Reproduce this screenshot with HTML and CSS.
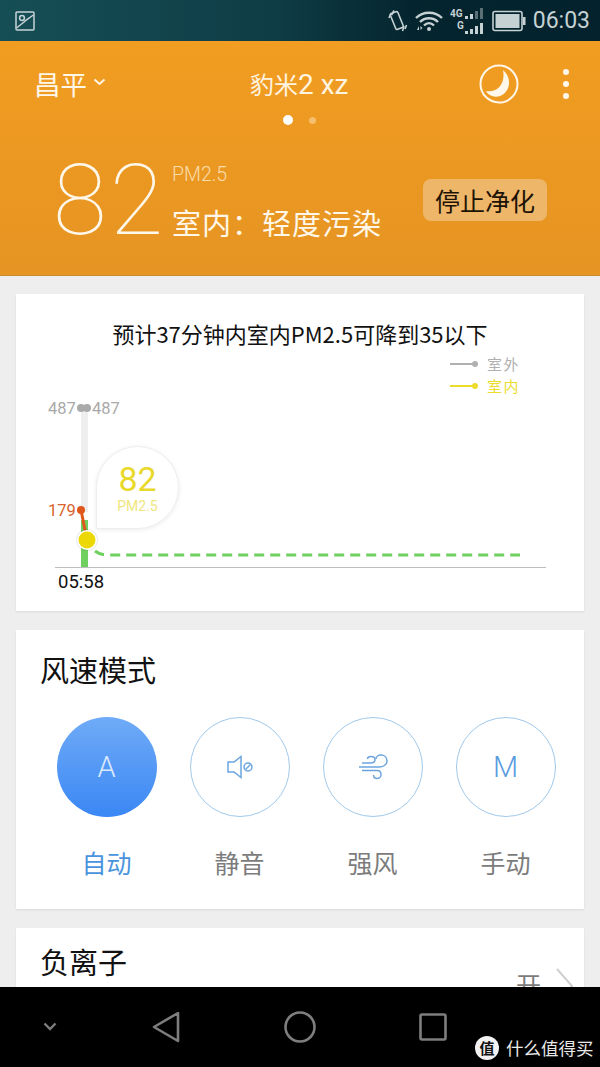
FILE: index.html
```html
<!DOCTYPE html>
<html lang="zh-CN">
<head>
<meta charset="utf-8">
<title>豹米2 xz</title>
<link rel="stylesheet" href="styles.css">
</head>
<body>
<div class="phone">
  <div class="status">
    <svg class="pic" width="20" height="20" viewBox="0 0 20 20"><rect x="1" y="1" width="18" height="18" rx="1"/><circle cx="7" cy="7" r="2.4"/><path d="M1.5 17 L9 11 C11 9 13 8 18.500 4"/></svg>
    <div class="status-right">
      <svg class="ic-vib" width="20" height="26" viewBox="0 0 20 26"><rect x="5" y="4" width="8" height="17" rx="1.500" transform="rotate(-22 9 13)"/><path d="M3 5 L1 10 M6 2.500 L3.500 7 M16 18 L14.500 23 M18.500 17 L17 21"/></svg>
      <svg class="ic-wifi" width="28" height="24" viewBox="0 0 28 24"><path d="M1 9 C8 2 20 2 27 9 M5 13 C10 8 18 8 23 13 M9 16.500 C12 13.500 16 13.500 19 16.500"/><circle cx="14" cy="20" r="2" class="fill"/><path class="fill" d="M2 21 L4 17 L4 21 Z M5.500 17 L7.500 19 L5.500 21 Z"/></svg>
      <svg class="ic-sig" width="34" height="28" viewBox="0 0 34 28"><text x="0" y="10" class="sig-t">4G</text><text x="7" y="22" class="sig-t">G</text><rect x="15" y="9" width="3" height="3"/><rect x="20" y="7" width="3" height="5"/><rect class="dim" x="25" y="4" width="3" height="8"/><rect class="dim" x="30" y="1" width="3" height="11"/><rect x="15" y="24" width="3" height="3"/><rect x="20" y="22" width="3" height="5"/><rect x="25" y="19" width="3" height="8"/><rect x="30" y="16" width="3" height="11"/></svg>
      <svg class="ic-bat" width="34" height="22" viewBox="0 0 34 22"><rect class="bat-o" x="1" y="1.500" width="29" height="19" rx="2"/><rect class="bat-i" x="3.500" y="4" width="24" height="14"/><rect class="bat-i" x="31" y="7" width="2.500" height="8"/></svg>
      <span class="time">06:03</span>
    </div>
  </div>

  <header class="head">
    <div class="topbar">
      <div class="city">昌平<svg class="city-arrow" width="13" height="8" viewBox="0 0 13 8"><path d="M1.500 1.500 L6.500 6 L11.500 1.500"/></svg></div>
      <div class="name">豹米<span class="name-lat">2 xz</span></div>
      <div class="actions">
        <svg class="moon" width="40" height="40" viewBox="0 0 40 40"><circle cx="20" cy="20" r="18.500"/><path class="moon-f" d="M24 6 C33 13 32 28 21 32 C15 34 9 31 7 27 C17 29 27 21 24 6 Z"/></svg>
        <div class="more"><i></i><i></i><i></i></div>
      </div>
    </div>
    <div class="pager"><i class="on"></i><i></i></div>
    <div class="summary">
      <div class="big">82</div>
      <div class="sum-text">
        <div class="pm">PM2.5</div>
        <div class="level">室内：轻度污染</div>
      </div>
      <div class="stop">停止净化</div>
    </div>
  </header>

  <main class="content">
    <section class="card chart-card">
      <h2 class="chart-title">预计37分钟内室内PM2.5可降到35以下</h2>
      <div class="chart">
        <svg class="chart-svg" width="568" height="264" viewBox="16 348 568 264">
          <rect class="bar-g" x="81" y="408" width="7" height="104"/>
          <rect class="bar-gr" x="81" y="520" width="7" height="47"/>
          <circle class="dot-v" cx="81" cy="408" r="4"/><circle class="dot-v" cx="87" cy="408" r="4"/>
          <text class="t-v" x="48" y="414">487</text><text class="t-v" x="92" y="414">487</text>
          <text class="t-o" x="48" y="516">179</text>
          <line class="red" x1="81" y1="510" x2="87" y2="540"/><circle class="dot-o" cx="81" cy="510" r="4"/>
          <line class="axis" x1="55" y1="567.500" x2="546" y2="567.500"/>
          <path class="dash" d="M95 551 Q100 555 108 555 L520 555"/>
          <circle class="knob-s" cx="87" cy="540" r="11"/>
          <circle class="knob-w" cx="87" cy="540" r="10"/>
          <circle class="knob" cx="87" cy="540" r="8.500"/>
          <text class="t-x" x="58" y="588">05:58</text>
        </svg>
        <div class="legend">
          <div class="leg-row"><i class="leg-line"></i><i class="leg-dot"></i><span class="leg-text">室外</span></div>
          <div class="leg-row in"><i class="leg-line"></i><i class="leg-dot"></i><span class="leg-text">室内</span></div>
        </div>
        <div class="bubble"><div class="b-num">82</div><div class="b-unit">PM2.5</div></div>
      </div>
    </section>

    <section class="card mode-card">
      <h2 class="sec-title">风速模式</h2>
      <div class="modes">
        <div class="mode active"><div class="circle"><span class="letter">A</span></div><div class="label">自动</div></div>
        <div class="mode"><div class="circle"><svg class="m-ic" width="28" height="26" viewBox="0 0 28 26"><path d="M2 8 L8 8 L15 2.500 L15 23.500 L8 18 L2 18 Z"/><circle cx="22" cy="13" r="4"/><path d="M19.500 15.500 L24.500 10.500"/></svg></div><div class="label">静音</div></div>
        <div class="mode"><div class="circle"><svg class="m-ic" width="30" height="26" viewBox="0 0 30 26"><path d="M1 13 L21 13 C25 13 29 11 29 7 C29 3 26 1 23 1 C20 1 18 3 18 5"/><path d="M4 9 L13 9 C16 9 17 7 17 5.500 C17 3.500 15 2.500 13 2.500 C11 2.500 9.500 3.500 9.500 5"/><path d="M4 16.500 L19 16.500 C22 16.500 23 18.500 23 20.500 C23 23 21 24.500 19 24.500 C17 24.500 15.500 23 15.500 21"/></svg></div><div class="label">强风</div></div>
        <div class="mode"><div class="circle"><span class="letter">M</span></div><div class="label">手动</div></div>
      </div>
    </section>

    <section class="card ion-card">
      <h2 class="sec-title">负离子</h2>
      <div class="ion-state"><span class="ion-val">开</span><svg class="ion-arrow" width="18" height="36" viewBox="0 0 18 36"><path d="M1 1 L16 18 L1 35"/></svg></div>
    </section>
  </main>

  <nav class="nav">
    <svg class="nav-down" width="14" height="9" viewBox="0 0 14 9"><path d="M1.500 1.500 L7 7 L12.500 1.500"/></svg>
    <svg class="nav-ic" width="28" height="32" viewBox="0 0 28 32"><path d="M26 2 L26 30 L2 16 Z"/></svg>
    <svg class="nav-ic" width="32" height="32" viewBox="0 0 32 32"><circle cx="16" cy="16" r="14.500"/></svg>
    <svg class="nav-ic" width="28" height="28" viewBox="0 0 28 28"><rect x="1.500" y="1.500" width="25" height="25" rx="1.500"/></svg>
    <div class="mark"><span class="mark-c">值</span><span class="mark-t">什么值得买</span></div>
  </nav>
</div>
</body>
</html>
```
FILE: styles.css
```css
* { box-sizing: border-box; }
html, body { margin: 0; padding: 0; }
body { font-family: "Noto Sans CJK SC", Roboto, sans-serif; background: #eeeeef; }
.phone { position: relative; width: 600px; height: 1067px; overflow: hidden; background: #eeeeef; }

.status { height: 41px; display: flex; align-items: center; justify-content: space-between; padding: 0 10px 0 15px; background: linear-gradient(90deg, #164e56 0%, #0f3d46 45%, #04242e 70%, #03222d 100%); }
.status svg { display: block; }
.pic { fill: none; stroke: #c6d4d6; stroke-width: 1.500; }
.status-right { display: flex; align-items: center; }
.ic-vib { fill: none; stroke: #c6d1d3; stroke-width: 1.600; margin-right: 7px; }
.ic-wifi { fill: none; stroke: #c6d1d3; stroke-width: 2.400; margin-right: 7px; }
.ic-wifi .fill { fill: #c6d1d3; stroke: none; }
.ic-sig { fill: #c6d1d3; margin-right: 8px; }
.ic-sig .dim { fill: #5a7076; }
.sig-t { font: 700 10px Roboto, sans-serif; fill: #c6d1d3; }
.bat-o { fill: none; stroke: #c6d1d3; stroke-width: 1.600; }
.bat-i { fill: #c6d1d3; }
.time { font: 400 23px Roboto, sans-serif; color: #c5d1d3; margin-left: 7px; }

.head { height: 235px; background: linear-gradient(180deg, #f19d21 0%, #e69423 100%); border-bottom: 1px solid #c98b35; color: #fff; }
.topbar { height: 86px; display: flex; align-items: center; padding: 0 31px 1px 34px; position: relative; }
.city { font-size: 26.500px; line-height: 38px; color: #fff7e8; display: flex; align-items: center; width: 210px; }
.city-arrow { fill: none; stroke: #fff7e8; stroke-width: 2; margin: 0 0 4px 6px; }
.name { flex: 1; font-size: 24px; line-height: 34px; color: #fff4e0; padding-left: 6px; white-space: nowrap; }
.name-lat { font: 400 28px Roboto, sans-serif; }
.actions { display: flex; align-items: center; gap: 44px; }
.moon { fill: none; stroke: #fff7ea; stroke-width: 2; }
.moon-f { fill: #fff7ea; stroke: none; }
.more { display: flex; flex-direction: column; gap: 6px; width: 6px; }
.more i { display: block; width: 6px; height: 6px; border-radius: 50%; background: #fff7ea; }
.pager { display: flex; justify-content: center; align-items: center; gap: 16px; height: 0; margin-top: -7px; transform: translateX(-1px); }
.pager i { display: block; width: 7px; height: 7px; border-radius: 50%; background: #f6bf6c; }
.pager .on { width: 10px; height: 10px; background: #fff; }
.summary { display: flex; align-items: flex-start; padding: 32px 0 0 53px; }
.big { font: 100 98px/98px Roboto, sans-serif; width: 119px; color: #fff8ea; letter-spacing: 3px; }
.sum-text { width: 251px; }
.pm { font: 300 19.500px/22px Roboto, sans-serif; color: #fbdcab; margin-top: 12px; }
.level { font-size: 29px; line-height: 40px; color: #fff8ea; margin-top: 16px; letter-spacing: 1px; white-space: nowrap; }
.stop { width: 124px; height: 42px; margin-top: 27px; border-radius: 8px; background: #eeb668; color: #1c1306; font-size: 25px; line-height: 42px; text-align: center; }

.content { padding: 18px 16px 0; display: flex; flex-direction: column; gap: 19px; }
.card { background: #fff; box-shadow: 0 1px 2px rgba(0,0,0,.09); }
.chart-card { height: 317px; }
.chart-title { margin: 0; height: 54px; font-size: 22px; font-weight: 400; line-height: 28px; padding-top: 25px; text-align: center; color: #111; white-space: nowrap; }
.chart { position: relative; height: 263px; }
.chart-svg { position: absolute; left: 0; top: 0; }
.legend { position: absolute; left: 434px; top: 5px; }
.leg-row { display: flex; align-items: center; height: 22px; color: #b0b0b0; }
.leg-row.in { color: #ecdc2c; }
.leg-line { display: block; width: 25px; height: 2px; background: currentColor; }
.leg-dot { display: block; width: 6px; height: 6px; border-radius: 50%; background: currentColor; margin-left: -3px; }
.leg-text { font-size: 15px; line-height: 22px; letter-spacing: 1.500px; margin-left: 9px; }
.bar-g { fill: #eeeeee; }
.bar-gr { fill: #6fd05f; }
.dot-v { fill: #aaa; }
.t-v { font: 400 16.500px Roboto, sans-serif; fill: #a9a9a9; }
.t-o { font: 400 16.500px Roboto, sans-serif; fill: #d9622c; }
.red { stroke: #e0571c; stroke-width: 3; }
.dot-o { fill: #e0571c; }
.axis { stroke: #bdbdbd; stroke-width: 1; }
.dash { fill: none; stroke: #6fd05f; stroke-width: 3; stroke-dasharray: 10 6; }
.knob-s { fill: rgba(0,0,0,.08); }
.knob-w { fill: #fff; }
.knob { fill: #ecd806; }
.t-x { font: 400 18.500px Roboto, sans-serif; fill: #111; }
.bubble { position: absolute; left: 80px; top: 98px; width: 83px; height: 83px; border-radius: 50% 50% 50% 0; background: #fff; border: 1px solid #eee; box-shadow: 0 1px 5px rgba(0,0,0,.08); text-align: center; }
.b-num { font: 400 34px/36px Roboto, sans-serif; color: #e9d92a; margin-top: 14px; }
.b-unit { font: 400 14px/16px Roboto, sans-serif; color: #efe67e; margin-top: 1px; }

.sec-title { margin: 0; font-size: 29px; font-weight: 400; line-height: 40px; color: #111; padding: 19px 0 0 24px; }
.mode-card { height: 279px; }
.modes { display: grid; grid-template-columns: repeat(4, 133px); padding: 28px 0 0 24px; }
.mode { display: flex; flex-direction: column; align-items: center; }
.circle { width: 100px; height: 100px; border-radius: 50%; border: 1.700px solid #a0c9ec; display: flex; align-items: center; justify-content: center; color: #5a9be0; }
.letter { font: 300 29px Roboto, sans-serif; }
.m-ic { fill: none; stroke: #6aa5e0; stroke-width: 1.500; }
.label { font-size: 25px; line-height: 36px; color: #7c7c7c; margin-top: 27px; }
.active .circle { border: 0; background: linear-gradient(180deg, #6fabf7 0%, #3a87f4 100%); }
.active .letter { color: #dbe9fc; }
.active .label { color: #4a94de; }

.ion-card { height: 140px; position: relative; }
.ion-card .sec-title { padding-top: 13px; }
.ion-state { position: absolute; right: 10px; top: 38px; display: flex; align-items: flex-start; gap: 15px; }
.ion-val { font-size: 25px; line-height: 36px; color: #7c7c7c; }
.ion-arrow { fill: none; stroke: #cfcfcf; stroke-width: 2; margin-top: 2px; }

.nav { position: absolute; left: 0; right: 0; top: 987px; height: 80px; background: #000; display: flex; align-items: center; padding: 0 0 0 43px; }
.nav svg { display: block; margin-top: -1px; }
.nav-down { fill: none; stroke: #7e7e7e; stroke-width: 2.400; margin-right: 95px; }
.nav-ic { fill: none; stroke: #7e7e7e; stroke-width: 2.600; stroke-linejoin: round; }
.nav-ic:nth-of-type(2) { margin-right: 104px; }
.nav-ic:nth-of-type(3) { margin-right: 103px; }
.mark { position: absolute; left: 475px; top: 49px; display: flex; align-items: center; color: #e8e8e8; }
.mark-c { width: 24px; height: 24px; border-radius: 50%; background: #f2f2f2; color: #111; font-size: 15px; line-height: 24px; text-align: center; font-weight: 700; }
.mark-t { font-size: 17.500px; line-height: 24px; margin-left: 7px; white-space: nowrap; }
```
